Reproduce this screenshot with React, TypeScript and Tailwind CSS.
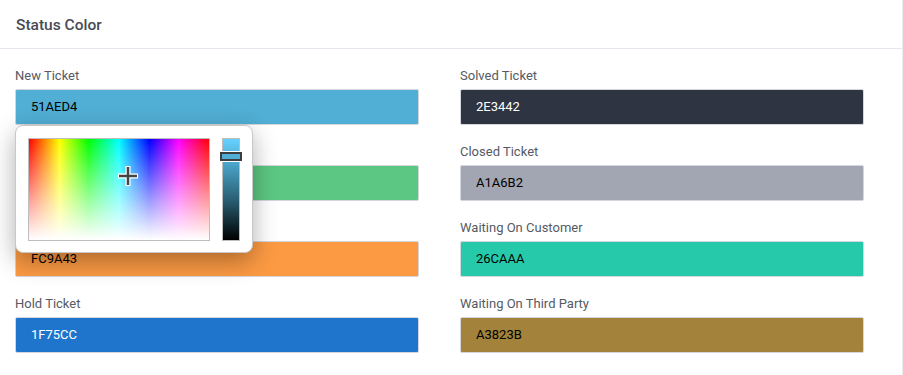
import { useState } from "react";

type Status = { label: string; hex: string; light: boolean };

const left: Status[] = [
	{ label: "New Ticket", hex: "51AED4", light: false },
	{ label: "Open Ticket", hex: "5CC782", light: false },
	{ label: "Pending Ticket", hex: "FC9A43", light: false },
	{ label: "Hold Ticket", hex: "1F75CC", light: true },
];

const right: Status[] = [
	{ label: "Solved Ticket", hex: "2E3442", light: true },
	{ label: "Closed Ticket", hex: "A1A6B2", light: false },
	{ label: "Waiting On Customer", hex: "26CAAA", light: false },
	{ label: "Waiting On Third Party", hex: "A3823B", light: false },
];

const ColorPicker = () => (
	<div className="absolute left-0 top-full z-10 flex w-[238px] h-[128px] gap-[12px] rounded-lg border border-[#c8c8c8] bg-white p-[12px] shadow-[0_8px_24px_rgba(0,0,0,0.32)]">
		<div className="relative h-[103px] w-[183px] border border-[#bdbdbd] bg-[linear-gradient(to_right,#ff0000,#ffff00_17%,#00ff00_33%,#00ffff_50%,#0000ff_67%,#ff00ff_83%,#ff0000)]">
			<div className="absolute inset-0 bg-[linear-gradient(to_bottom,rgba(255,255,255,0),#ffffff)]" />
			<svg className="absolute left-[88px] top-[26px]" width="22" height="22" viewBox="0 0 22 22">
				<path d="M11 1v20M1 11h20" stroke="#fff" strokeWidth="5" />
				<path d="M11 2v18M2 11h18" stroke="#444" strokeWidth="2.5" />
			</svg>
		</div>
		<div className="relative h-[103px] w-[18px] border border-[#bdbdbd] bg-[linear-gradient(to_bottom,#66d2ff,#4aa3c8_25%,#2a5f74_60%,#000000)]">
			<div className="absolute left-[-3px] top-[13px] h-[9px] w-[22px] border-2 border-[#3d3d3d] bg-[#51aed4] outline outline-1 outline-white" />
		</div>
	</div>
);

const Field = ({ s, picker }: { s: Status; picker?: boolean }) => (
	<div className="relative flex flex-col gap-[6px]">
		<label className="text-[13px] leading-[15px] text-[#555a64]">{s.label}</label>
		<div
			className={`flex h-[36px] items-center rounded-[2px] border border-[#d3d6dc] px-[15px] text-[13px] ${s.light ? "text-white" : "text-black"}`}
			style={{ backgroundColor: `#${s.hex}` }}
		>
			{s.hex}
		</div>
		{picker && <ColorPicker />}
	</div>
);

export default function App() {
	const [open] = useState(true);
	return (
		<div className="h-[375px] w-[903px] bg-white font-['Roboto','Liberation_Sans',sans-serif]">
			<div className="h-full rounded-tl-md border-r border-[#ececf2] bg-white">
				<div className="flex h-[49px] items-center border-b border-[#e6e6ef] px-[16px] pt-[3px]">
					<h2 className="text-[15.5px] font-medium text-[#474a55]">Status Color</h2>
				</div>
				<div className="grid grid-cols-[404px_404px] gap-x-[41px] px-[15px] pt-[19px]">
					<div className="flex flex-col gap-[19px]">
						{left.map((s, i) => <Field key={s.label} s={s} picker={open && i === 0} />)}
					</div>
					<div className="flex flex-col gap-[19px]">
						{right.map((s) => <Field key={s.label} s={s} />)}
					</div>
				</div>
			</div>
		</div>
	);
}
